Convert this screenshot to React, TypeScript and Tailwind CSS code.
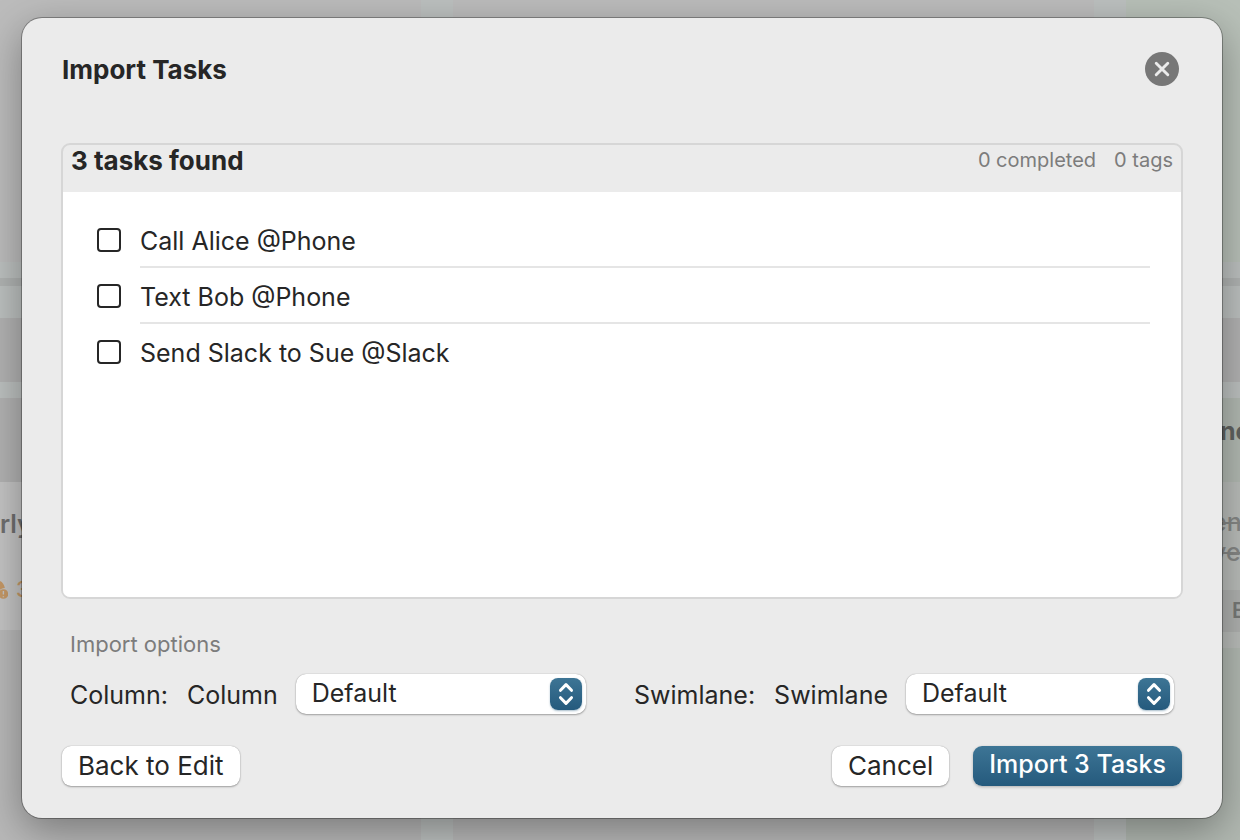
import { useState } from 'react';
import clsx from 'clsx';

const initialTasks = [
  { id: 'call-alice', title: 'Call Alice @Phone', done: false },
  { id: 'text-bob', title: 'Text Bob @Phone', done: false },
  { id: 'send-slack', title: 'Send Slack to Sue @Slack', done: false },
];

const buttonBase = 'flex h-10 items-center rounded-[9px] px-4 pb-[2px]';
const buttonPlain = 'bg-white shadow-[0_0_1px_rgba(0,0,0,0.35),0_1px_2px_rgba(0,0,0,0.3)]';
const buttonPrimary = 'bg-gradient-to-b from-[#3d7595] to-[#255a7d] text-white shadow-[0_1px_3px_rgba(0,0,0,0.25)]';

function PopupSelect({ id, label, caption, className }: { id: string; label: string; caption: string; className: string }) {
  return (
    <div className={clsx('flex items-center', className)}>
      <span className="mr-[19px] pt-[3px] whitespace-nowrap">{label}</span>
      <label htmlFor={id} className="mr-[18px] pt-[3px] whitespace-nowrap">{caption}</label>
      <div className="relative min-w-0 flex-1">
        <select
          id={id}
          className={clsx('block h-10 w-full appearance-none rounded-[10px] pl-4 text-[25px]', buttonPlain)}
        >
          <option>Default</option>
        </select>
        <span className="pointer-events-none absolute top-1 right-1 flex size-8 items-center justify-center rounded-lg bg-gradient-to-b from-[#3d7595] to-[#255a7d] shadow-[0_1px_2px_rgba(37,90,125,0.4)]">
          <svg width="32" height="32" viewBox="0 0 32 32" fill="none" stroke="white" strokeWidth="3" strokeLinecap="round" strokeLinejoin="round">
            <path d="M10.5 12.3 L16 6.6 L21.5 12.3" />
            <path d="M10.5 19.7 L16 25.4 L21.5 19.7" />
          </svg>
        </span>
      </div>
    </div>
  );
}

/* Dimmed kanban board behind the sheet */
function Board() {
  return (
    <div className="col-start-1 row-start-1 flex flex-col overflow-hidden bg-[#bcc0bf] text-[#6f6f6f]">
      <div className="flex h-[262px] gap-8">
        <div className="w-[421px] bg-[#bcbcbc]" />
        <div className="flex-1 bg-[#bcbcbc]" />
        <div className="w-[114px] bg-[#b8c0b8]" />
      </div>
      <div className="mt-4 h-2 bg-[#b0b3b2]" />
      <div className="mt-8 h-16 bg-[#b2b2b2]" />
      <div className="mt-4 flex flex-1 gap-8">
        <div className="flex w-[421px] flex-col bg-[#b8b8b8]">
          <div className="h-[84px] bg-[#b2b2b2]" />
          <div className="h-[148px] bg-[#c4c4c4] pt-6">
            <div className="text-[25px] leading-9 font-semibold">rly</div>
            <div className="mt-8 flex h-8 items-center gap-2 text-[21px] font-medium text-[#c59866]">
              <svg className="shrink-0" width="8" height="20" viewBox="0 0 8 20" fill="#c59866">
                <path d="M0 1 C2.5 2 4.4 5 4.8 8 C2.5 8.2 0.5 9 0 10 Z" />
                <circle cx="3.4" cy="14" r="4.8" />
                <path d="M3.4 11 V14.6 M3.4 16.3 V17.2" stroke="#c4c4c4" strokeWidth="1.4" />
              </svg>
              3
            </div>
          </div>
        </div>
        <div className="flex-1 bg-[#b8b8b8]" />
        <div className="flex w-[114px] flex-col bg-[#b1b8b1]">
          <div className="flex h-[84px] justify-end overflow-hidden pt-[15px] text-[25px] leading-9 font-bold text-[#606260]">
            <span className="w-5">ne</span>
          </div>
          <div className="flex h-[108px] justify-end overflow-hidden bg-[#b9bcb9] pt-[25px] text-[25px] leading-[30px] font-medium text-[#858785]">
            <span className="w-7 whitespace-nowrap line-through">
              en
              <br />
              ve
            </span>
          </div>
          <div className="flex h-[42px] items-center justify-end overflow-hidden bg-[#afb1af] text-[21px] font-semibold text-[#777977]">
            <span className="w-2">E</span>
          </div>
          <div className="h-4 bg-[#b9bcb9]" />
        </div>
      </div>
    </div>
  );
}

export default function App() {
  const [tasks, setTasks] = useState(initialTasks);

  const toggle = (id: string) =>
    setTasks((list) => list.map((t) => (t.id === id ? { ...t, done: !t.done } : t)));

  return (
    <div className="grid min-h-screen grid-cols-1 overflow-hidden font-['Inter','Liberation_Sans',sans-serif] text-[#262626]">
      <Board />

      <div
        role="dialog"
        aria-labelledby="import-title"
        className="z-10 col-start-1 row-start-1 mt-[18px] mr-[18px] mb-[22px] ml-[22px] flex flex-col rounded-[20px] bg-[#ebebeb] px-10 pb-8 text-[25px] shadow-[0_0_0_1px_rgba(0,0,0,0.3),0_12px_40px_rgba(0,0,0,0.35)]"
      >
        <header className="flex items-start justify-between pt-[34px] pr-[3px]">
          <h1 id="import-title" className="text-[26px] leading-9 font-bold">Import Tasks</h1>
          <button type="button" aria-label="Close" className="rounded-full">
            <svg width="34" height="34" viewBox="0 0 34 34" fill="none">
              <circle cx="17" cy="17" r="17" fill="#777777" />
              <path d="M11.2 11.2 L22.8 22.8 M22.8 11.2 L11.2 22.8" stroke="#ebebeb" strokeWidth="2.9" strokeLinecap="round" />
            </svg>
          </button>
        </header>

        {/* Parsed tasks */}
        <section className="-mx-px mt-[55px] flex flex-1 flex-col overflow-hidden rounded-[9px] border-2 border-[#d6d6d6]">
          <div className="flex h-[47px] items-start justify-between px-2">
            <h2 className="text-[26px] leading-8 font-bold">3 tasks found</h2>
            <div className="flex gap-[18px] text-[20px] leading-[30px] text-[#7c7c7c]">
              <span>0 completed</span>
              <span>0 tags</span>
            </div>
          </div>
          <ul className="flex-1 bg-white pt-5 pr-[31px] pl-[34px]">
            {tasks.map((task, i) => (
              <li key={task.id} className="flex h-14 items-center">
                <input
                  id={task.id}
                  type="checkbox"
                  checked={task.done}
                  onChange={() => toggle(task.id)}
                  className="mr-[19px] size-6 shrink-0 appearance-none rounded-[4px] border-2 border-[#262626] checked:bg-[#262626]"
                />
                <label
                  htmlFor={task.id}
                  className={clsx(
                    'flex h-14 flex-1 items-center border-b-2 pt-[5px]',
                    i < tasks.length - 1 ? 'border-[#e5e5e5]' : 'border-transparent'
                  )}
                >
                  {task.title}
                </label>
              </li>
            ))}
          </ul>
        </section>

        <fieldset className="mt-[27px] px-2">
          <legend className="text-[22px] leading-9 text-[#7c7c7c]">Import options</legend>
          <div className="mt-3 flex gap-12">
            <PopupSelect id="column" label="Column:" caption="Column" className="w-[516px]" />
            <PopupSelect id="swimlane" label="Swimlane:" caption="Swimlane" className="flex-1" />
          </div>
        </fieldset>

        <footer className="mt-8 flex items-center text-[26px]">
          <button type="button" className={clsx(buttonBase, buttonPlain)}>Back to Edit</button>
          <button type="button" className={clsx(buttonBase, buttonPlain, 'ml-auto')}>Cancel</button>
          <button type="button" className={clsx(buttonBase, buttonPrimary, 'ml-6 text-[25px] font-medium')}>Import 3 Tasks</button>
        </footer>
      </div>
    </div>
  );
}
